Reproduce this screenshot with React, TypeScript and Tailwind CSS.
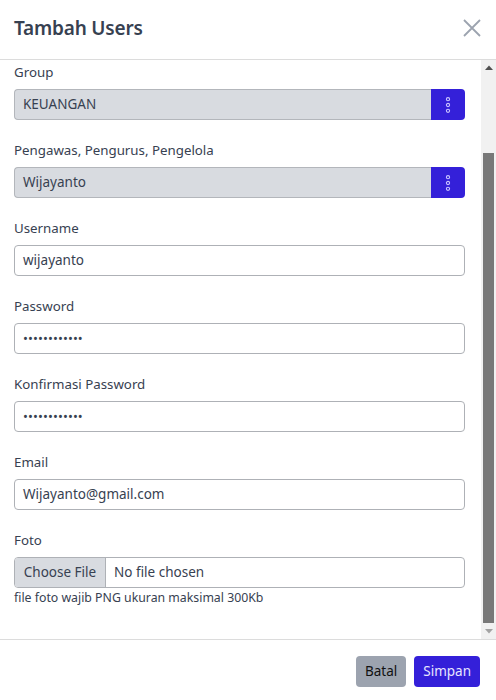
import React from "react";

const font = { fontFamily: '"Noto Sans", "Open Sans", sans-serif' };

function Dots() {
  return (
    <svg width="8" height="18" viewBox="0 0 8 18" fill="none">
      <circle cx="4" cy="3.2" r="1.6" stroke="#c9c4ff" strokeWidth="1.1" />
      <circle cx="4" cy="9" r="1.6" stroke="#c9c4ff" strokeWidth="1.1" />
      <circle cx="4" cy="14.8" r="1.6" stroke="#c9c4ff" strokeWidth="1.1" />
    </svg>
  );
}

function Label({ children }: { children: React.ReactNode }) {
  return <div className="text-[13.3px] leading-[21px] text-[#374151] mb-[6px]">{children}</div>;
}

function PickField({ label, value }: { label: string; value: string }) {
  return (
    <div className="mb-5">
      <Label>{label}</Label>
      <div className="flex h-[31px]">
        <div className="flex-1 flex items-center bg-[#d8dbe0] border border-[#b3b6bb] border-r-0 rounded-l-[4px] pl-[8px] text-[13.5px] text-[#374151]">
          {value}
        </div>
        <div className="w-[34px] flex items-center justify-center bg-[#3420d9] rounded-r-[4px]">
          <Dots />
        </div>
      </div>
    </div>
  );
}

function TextField({ label, value, password }: { label: string; value: string; password?: boolean }) {
  return (
    <div className="mb-5">
      <Label>{label}</Label>
      <div className="h-[31px] flex items-center border border-[#aeb1b6] rounded-[4px] bg-white pl-[8px] text-[13.5px] text-[#374151]">
        {password ? (
          <span className="text-[13px] tracking-[0.1px] text-[#374151]">{"•".repeat(12)}</span>
        ) : (
          value
        )}
      </div>
    </div>
  );
}

function Scrollbar() {
  return (
    <div className="w-[15px] shrink-0 bg-[#f1f1f1] flex flex-col">
      <div className="h-[15px] flex items-center justify-center">
        <svg width="8" height="5" viewBox="0 0 8 5">
          <path d="M0 5 L4 0.5 L8 5 Z" fill="#505050" />
        </svg>
      </div>
      <div className="h-[78px]" />
      <div className="h-[470px] mx-[2px] bg-[#787878]" />
      <div className="flex-1 flex items-center justify-center">
        <svg width="8" height="5" viewBox="0 0 8 5">
          <path d="M0 0 L8 0 L4 4.5 Z" fill="#a3a3a3" />
        </svg>
      </div>
    </div>
  );
}

export default function App() {
  return (
    <div className="w-[496px] h-[700px] bg-white flex flex-col" style={font}>
      <div className="h-[60px] shrink-0 flex items-center justify-between border-b border-[#dcdcdc] pl-[14px] pr-[14px] pb-[3px]">
        <div className="text-[19px] font-semibold text-[#374151] tracking-[-0.2px]">Tambah Users</div>
        <svg width="20" height="20" viewBox="0 0 20 20">
          <path d="M2 2 L18 18 M18 2 L2 18" stroke="#9ca3af" strokeWidth="1.8" />
        </svg>
      </div>
      <div className="h-[579px] shrink-0 flex">
        <div className="flex-1 pl-[14px] pr-4 pt-[2px]">
          <PickField label="Group" value="KEUANGAN" />
          <PickField label="Pengawas, Pengurus, Pengelola" value="Wijayanto" />
          <TextField label="Username" value="wijayanto" />
          <TextField label="Password" value="" password />
          <TextField label="Konfirmasi Password" value="" password />
          <TextField label="Email" value="Wijayanto@gmail.com" />
          <div>
            <Label>Foto</Label>
            <div className="h-[31px] flex border border-[#aeb1b6] rounded-[4px] overflow-hidden text-[13.5px] text-[#374151]">
              <div className="w-[91px] shrink-0 bg-[#d8dbe0] border-r border-[#aeb1b6] flex items-center justify-center">
                Choose File
              </div>
              <div className="flex items-center pl-[8px]">No file chosen</div>
            </div>
            <div className="text-[12.3px] leading-[18px] text-[#374151] mt-[1px]">
              file foto wajib PNG ukuran maksimal 300Kb
            </div>
          </div>
        </div>
        <Scrollbar />
      </div>
      <div className="flex-1 border-t border-[#dcdcdc] flex items-center justify-end gap-2 pr-4 pt-[2px]">
        <button className="h-[31px] px-[9px] rounded-[4px] bg-[#9ca3af] text-[13.5px] text-[#111]">Batal</button>
        <button className="h-[31px] px-[9px] rounded-[4px] bg-[#3420d9] text-[13.5px] text-[#e8e6ff]">Simpan</button>
      </div>
    </div>
  );
}
